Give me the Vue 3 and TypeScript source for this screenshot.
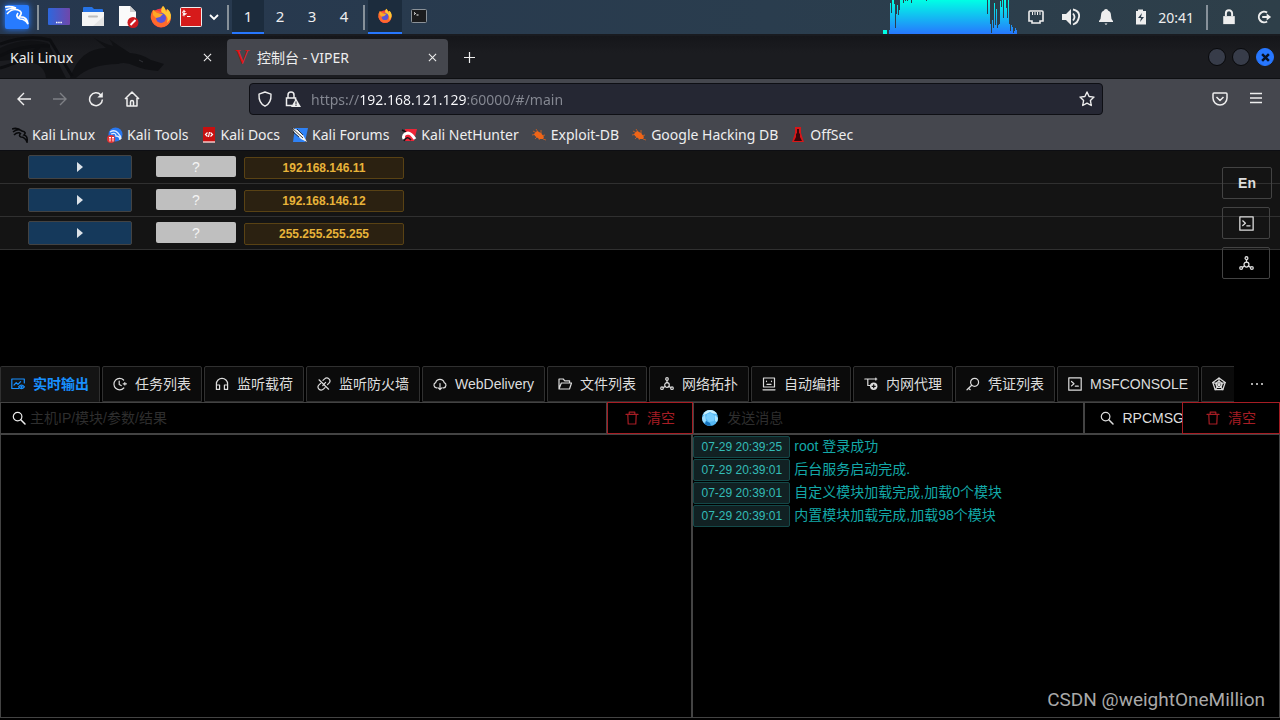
<script setup lang="ts">
import { ref } from 'vue'

interface Host { ip: string }
interface LogLine { time: string; text: string }
interface ConsoleTab { icon: string; label: string }
interface Bookmark { icon: string; label: string }

const stroke = 'fill="none" stroke="currentColor" stroke-width="1.2" stroke-linejoin="round" stroke-linecap="round"'

const lineIcons: Record<string, string> = {
  output: `<g ${stroke}><path d="M13.3 6V2H.8v9.5h7"/><path d="M3 8l2.2-2.3L7 7.4 9.6 4.6"/><path d="M7.6 9.8q2.8-3.6 5.8 0q-3 3.6-5.8 0z"/><circle cx="10.5" cy="9.8" r=".6"/></g>`,
  task: `<g ${stroke}><path d="M10.6 3A5.7 5.7 0 1 0 10.8 11"/><path d="M6.2 4v3.4l2 1.2M10.2 6.8h3.2M11.8 5.6v2.4"/></g>`,
  headset: `<g ${stroke}><path d="M1.4 12.4V7a5.6 5.6 0 0 1 11.2 0v5.4H9.4V8h3M1.6 8h3v4.4H1.4"/></g>`,
  unlink: `<g ${stroke}><path d="M6 3.400L7.600 1.900a3 3 0 0 1 4.400 4.300L10.500 7.700M8 10.600l-1.600 1.600A3 3 0 0 1 2 7.900l1.600-1.600M2 2.800l9.600 9.400M8.600 5.400L5.800 8.600"/></g>`,
  cloud: `<g ${stroke}><path d="M4 10.8H3.3A2.7 2.7 0 0 1 2.7 5.6A4.4 4.4 0 0 1 11.2 5.6A2.7 2.7 0 0 1 10.7 10.8H10M7 6.6v6M5.2 10.9L7 12.7l1.8-1.8"/></g>`,
  folder: `<g ${stroke}><path d="M1 12V2h4.2l1.6 1.8h4.8V6M1 12h10.5L13.500 6H3.300z"/></g>`,
  topology: `<g ${stroke}><circle cx="7" cy="2" r="1.3"/><circle cx="2" cy="11.2" r="1.3"/><circle cx="12" cy="11.2" r="1.3"/><circle cx="7" cy="8" r="2.3"/><path d="M7 3.3v2.4M5.2 9.4L3.2 10.6M8.8 9.4l2 1.2"/></g>`,
  robot: `<g ${stroke}><path d="M1.500 1h11v9h-11zM1 12.800h12M5 7.400h4"/><path d="M4.500 4v.6M9.500 4v.6"/></g>`,
  proxy: `<g ${stroke}><path d="M.8 2h12M3.800 2v6.500h3M11.800 1v2"/></g><circle cx="9.700" cy="9.300" r="3.700" fill="currentColor"/><path d="M9.700 7.300v4M7.700 9.300h4" stroke="#0c0c0c" stroke-width="1.2"/>`,
  key: `<g ${stroke}><circle cx="8.600" cy="5.300" r="4"/><path d="M5.700 8.200L1 12.800M2.600 11.300l1.600 1.400"/></g>`,
  terminal: `<g ${stroke}><path d="M.8.8h12.400v12.400H.8z"/><path d="M3.500 4.500L6 6.700 3.500 8.900M7.300 9.200h3"/></g>`,
  radar: `<g ${stroke}><path d="M7 1l6.200 4.500-2.400 7.200H3.200L.8 5.500z"/><path d="M7 4l3.300 2.500L9 10.300H5L3.700 6.500zM7 1v6.300M.8 5.500L7 7.300l6.200-1.800M3.200 12.700L7 7.300l3.800 5.400"/></g>`,
  search: `<g ${stroke}><circle cx="5.600" cy="5.600" r="4.300"/><path d="M8.800 8.800L13 13" stroke-width="1.500"/></g>`,
  trash: `<g ${stroke}><path d="M1 3.400h12M4.200 3.200V1.200h5.600v2M2.800 3.600l.4 9.400h7.600l.4-9.400"/></g>`,
}

const kaliMark = `<path d="M1 3Q7 2 12 4M2 6Q8 3 14 6M3 10Q8 4 14 6Q20 8 15 13Q23 12 24 20Q21 15 16 15Q11 13 14 9"/>`
const bookmarkIcons: Record<string, string> = {
  kali: `<g fill="none" stroke="#08090b" stroke-width="1.6"><path d="M0 2Q5 0 10 4M1 5Q6 1 10 4Q15 5 12 8Q16 9 15 15Q13 10 9 10Q6 9 9 6M2 8q3-3 6-2"/></g>`,
  tools: `<circle cx="8.500" cy="7.500" r="7" fill="#2877ef"/><path d="M3 5Q8 2 11 6Q14 9 14 12M4 7Q9 5 9 9q4 0 4 4" fill="none" stroke="#dcecff" stroke-width="1.3"/><circle cx="4" cy="12" r="4" fill="#e23131"/><path d="M2 10.500h2M3 10.500v4M5 10.500h2M6 10.500v4" stroke="#fff"/>`,
  docs: `<path d="M2 0h12v15H2z" fill="#c81010"/><path d="M2 15h12" stroke="#f4c7c7" stroke-width="1.5"/><path d="M6.500 5.500l-2 2 2 2M9.500 5.500l2 2-2 2M8.500 5l-1 5" fill="none" stroke="#fff" stroke-width="1.2"/>`,
  forums: `<path d="M3 1h13l-3 14H1z" fill="#2f82f5"/><path d="M0 1l6 2 5 5 4 7-6-3-6-6z" fill="#f6f6f6"/><path d="M0 1l11 10M1 5l6 5M5 2l6 6" stroke="#111" stroke-width=".8"/>`,
  hunter: `<path d="M4 2h12l-3 12H3z" fill="#ec2537"/><path d="M1 3l4 2" stroke="#111" stroke-width="1.5"/><path d="M3 12Q1 7 7 6Q10 6 14 12" fill="none" stroke="#fff" stroke-width="3"/><path d="M3 14q3-6 7-1" fill="none" stroke="#16171a" stroke-width="1.6"/>`,
  bug: `<path d="M3 7l3-3 4 2 3 4-1 2-4 0-4-3z" fill="#ef6518"/><path d="M1 8l5-1M4 12l3-3M5 2l2 3M10 3l0 4M14 8l-4 1M2 4l4 2M8 13l1-2M12 12l3 1" stroke="#ef6518" stroke-width=".7"/>`,
  offsec: `<path d="M5 0h6v6l3 9H2l3-9z" fill="#d71618"/><path d="M7 2h2v4l1 1v3l2 4H4l2-4V7l1-1z" fill="#3b0509"/>`,
}

const firefox = `<circle cx="12" cy="13" r="9.500" fill="#f73b4b"/><path d="M4 5Q1 9 2 14Q4 20 10 22Q18 23 21 17Q24 10 18 4Q17 7 14 1Q11 4 12 7Q7 5 4 5z" fill="#ff6a2c"/><path d="M14 1q-4 5 1 8t3 9q6-5 3-11-1-2-3-3 0 2-1 3-1-5-3-6z" fill="#ffc833"/><circle cx="12" cy="13" r="5" fill="#5a55d8"/><path d="M4 5l4 3 6 1-3 3-4 1-3-3z" fill="#ffa725"/>`

const workspaces: string[] = ['1', '2', '3', '4']
const bookmarks: Bookmark[] = [
  { icon: 'kali', label: 'Kali Linux' },
  { icon: 'tools', label: 'Kali Tools' },
  { icon: 'docs', label: 'Kali Docs' },
  { icon: 'forums', label: 'Kali Forums' },
  { icon: 'hunter', label: 'Kali NetHunter' },
  { icon: 'bug', label: 'Exploit-DB' },
  { icon: 'bug', label: 'Google Hacking DB' },
  { icon: 'offsec', label: 'OffSec' },
]
const hosts: Host[] = [{ ip: '192.168.146.11' }, { ip: '192.168.146.12' }, { ip: '255.255.255.255' }]
const tabs: ConsoleTab[] = [
  { icon: 'output', label: '实时输出' },
  { icon: 'task', label: '任务列表' },
  { icon: 'headset', label: '监听载荷' },
  { icon: 'unlink', label: '监听防火墙' },
  { icon: 'cloud', label: 'WebDelivery' },
  { icon: 'folder', label: '文件列表' },
  { icon: 'topology', label: '网络拓扑' },
  { icon: 'robot', label: '自动编排' },
  { icon: 'proxy', label: '内网代理' },
  { icon: 'key', label: '凭证列表' },
  { icon: 'terminal', label: 'MSFCONSOLE' },
  { icon: 'radar', label: '' },
]
const logs: LogLine[] = [
  { time: '07-29 20:39:25', text: 'root 登录成功' },
  { time: '07-29 20:39:01', text: '后台服务启动完成.' },
  { time: '07-29 20:39:01', text: '自定义模块加载完成,加载0个模块' },
  { time: '07-29 20:39:01', text: '内置模块加载完成,加载98个模块' },
]

const activeTab = ref(0)
const workspace = ref('1')
const address = ref('https://192.168.121.129:60000/#/main')
const filterText = ref('')
const message = ref('')

// CPU load samples: distance of each bar's top from the panel's top edge
const rise = [30, 3, 13, 0, 0, 4, 28, 14, 5, 15, 10]
const plateau = Array.from({ length: 87 }, (_, i) => ({ 3: 3, 5: 1, 7: 1, 11: 3, 26: 1 } as Record<number, number>)[i] ?? 0)
const fall = [14, 0, 0, 24, 33, 20, 28, 3, 25, 9, 28, 25, 24, 1, 7, 0, 18, 0, 0, 8, 18, 0, 24, 31, 25, 27, 33, 31, 28, 30]
const graphPath = [...rise, ...plateau, ...fall].map((top, i) => `M${i + 6} ${top}h1V34h-1z`).join('')
</script>

<template>
  <div class="desktop">
    <header class="panel">
      <button class="launcher" aria-label="Applications">
        <svg viewBox="0 0 26 26"><rect x="1" y="1" width="24" height="24" rx="2" fill="#277bff" /><g fill="none" stroke="#fff" stroke-width="1.7" v-html="kaliMark" /></svg>
      </button>
      <i class="rule"></i>
      <button class="launch" aria-label="Show desktop">
        <svg viewBox="0 0 24 24"><defs><linearGradient id="desk" x2="1" y2="0"><stop stop-color="#2d67dd" /><stop offset="1" stop-color="#7047aa" /></linearGradient></defs><rect x="1" y="3" width="22" height="17" rx="1" fill="url(#desk)" /><path d="M9 17.500h6" stroke="#fff" stroke-width="1.5" stroke-dasharray="1.5 .7" /></svg>
      </button>
      <button class="launch" aria-label="Files">
        <svg viewBox="0 0 24 24"><path d="M2 10V3q0-1 1-1h8l2 2h8q1 0 1 1v4z" fill="#2673e6" /><path d="M1 7h22v14H1z" fill="#f5f5f5" /><path d="M12 21L23 11v10z" fill="#e4e4e4" /><path d="M8 11.500h8" stroke="#bdbdbd" stroke-width="2" stroke-linecap="round" /></svg>
      </button>
      <button class="launch" aria-label="Editor">
        <svg viewBox="0 0 24 24"><path d="M4 1h11l6 6v14H4z" fill="#fafafa" /><path d="M15 1v6h6z" fill="#cfcfcf" /><circle cx="18" cy="17.500" r="5.500" fill="#cf1b20" /><path d="M15.500 20l5-5" stroke="#fff" stroke-width="2" /></svg>
      </button>
      <button class="launch" aria-label="Firefox"><svg viewBox="0 0 24 24" v-html="firefox" /></button>
      <button class="launch term" aria-label="Root terminal">
        <svg viewBox="0 0 24 24"><rect x="1.500" y="2.500" width="21" height="19" rx="1" fill="#d61a1a" stroke="#eee" /><g fill="none" stroke="#fff"><path d="M6.500 6.500q-3-1-3 .8t3 1.400-3 1.400M5 4.800v6.500M8 11.500h3.500" /></g></svg>
      </button>
      <svg class="chev" viewBox="0 0 10 10"><path d="M1 3l4 4 4-4" fill="none" stroke="#fff" stroke-width="1.8" /></svg>
      <i class="rule tight"></i>
      <nav class="spaces">
        <button v-for="n in workspaces" :key="n" :class="{ on: workspace === n }" @click="workspace = n">{{ n }}</button>
      </nav>
      <i class="rule tight"></i>
      <button class="window on" aria-label="Firefox window"><svg viewBox="0 0 24 24" v-html="firefox" /></button>
      <button class="window" aria-label="Terminal window">
        <svg viewBox="0 0 16 16"><rect x=".5" y="1.500" width="15" height="13" rx="1" fill="#1b1c1e" stroke="#8b9299" /><path d="M3 4.500l1.500 1L3 6.500M5.500 7h2" fill="none" stroke="#fff" /></svg>
      </button>
      <svg class="graph" viewBox="0 0 134 34">
        <defs><linearGradient id="load" gradientUnits="userSpaceOnUse" x1="0" y1="0" x2="0" y2="34"><stop stop-color="#00ffe5" /><stop offset="1" stop-color="#2777ff" /></linearGradient></defs>
        <path d="M0 30h4v4H0z" fill="#00ffe5" /><path :d="graphPath" fill="url(#load)" shape-rendering="crispEdges" />
      </svg>
      <div class="tray">
        <button aria-label="Network"><svg viewBox="0 0 18 18"><path d="M3 3h12q1 0 1 1v9h-3v2H5v-2H2V4q0-1 1-1z" fill="none" stroke="currentColor" stroke-width="1.6" /><path d="M5.500 4v3M8 4v3M10.500 4v3M13 4v3" stroke="currentColor" /></svg></button>
        <button aria-label="Volume"><svg viewBox="0 0 18 18"><path d="M0 6h4l5-5v16l-5-5H0z" fill="currentColor" /><path d="M11 5.500q3 3.500 0 7M11 1.500q7 1.500 6 7.500t-6 7.500" fill="none" stroke="currentColor" stroke-width="1.8" /></svg></button>
        <button aria-label="Notifications"><svg viewBox="0 0 18 18"><path d="M9 1q2 0 2 1.500 3 1 3 5 0 4 2 5.500v1H2v-1q2-1.500 2-5.500 0-4 3-5Q7 1 9 1zM7.500 15.500h3l-1.500 1.500z" fill="currentColor" /></svg></button>
        <button aria-label="Battery"><svg viewBox="0 0 18 18"><path d="M6 3V1.500h5V3h3v13.500H4V3z" fill="currentColor" /><path d="M10 5l-4 5h3l-1 4 4-5H9z" fill="#2d3e4c" /></svg></button>
      </div>
      <time class="clock">20:41</time>
      <i class="rule"></i>
      <button class="sys" aria-label="Lock"><svg viewBox="0 0 18 18"><path d="M2.500 8h13v9h-13z" fill="currentColor" /><path d="M5.500 8V5a3.500 3.500 0 0 1 7 0v3" fill="none" stroke="currentColor" stroke-width="2.2" /></svg></button>
      <button class="sys" aria-label="Log out"><svg viewBox="0 0 18 18"><path d="M12.500 4A6 6 0 1 0 12.500 14" fill="none" stroke="currentColor" stroke-width="2.2" /><path d="M7 8h5V5l5 4-5 4v-3H7z" fill="currentColor" /></svg></button>
    </header>

    <div class="titlebar">
      <svg class="dragon" viewBox="0 0 180 42"><path d="M0 12Q25 0 48 7L66 42H46Q44 20 0 25zM70 42Q80 12 106 12L94 2Q105 8 113 10Q112 6 109 3Q119 10 130 17Q142 18 151 24L164 28 158 35Q144 34 135 30Q125 25 118 28Q91 28 76 42z" fill="#101114" /><path d="M0 8Q28-2 50 4L72 40M0 32Q26 25 39 11M0 20Q22 8 50 10" fill="none" stroke="#0d0e11" stroke-width="3" /><path d="M139 24l4 2" stroke="#303137" /></svg>
      <div class="btab"><span>Kali Linux</span><button class="x" aria-label="Close tab"><svg viewBox="0 0 10 10"><path d="M1 1l8 8M9 1L1 9" stroke="currentColor" stroke-width="1.2" /></svg></button></div>
      <div class="btab current"><b class="v">V</b><span>控制台 - VIPER</span><button class="x" aria-label="Close tab"><svg viewBox="0 0 10 10"><path d="M1 1l8 8M9 1L1 9" stroke="currentColor" stroke-width="1.2" /></svg></button></div>
      <button class="plus" aria-label="New tab"><svg viewBox="0 0 12 12"><path d="M6 0v12M0 6h12" stroke="currentColor" stroke-width="1.3" /></svg></button>
      <div class="wins">
        <button aria-label="Minimise"></button><button aria-label="Maximise"></button>
        <button class="close" aria-label="Close"><svg viewBox="0 0 8 8"><path d="M1 1l6 6M7 1L1 7" stroke="#071123" stroke-width="2.2" /></svg></button>
      </div>
    </div>

    <div class="toolbar">
      <div class="nav">
        <button aria-label="Back"><svg viewBox="0 0 16 16"><path d="M15 8H2M8 2L2 8l6 6" fill="none" stroke="currentColor" stroke-width="1.4" /></svg></button>
        <button aria-label="Forward" disabled><svg viewBox="0 0 16 16"><path d="M1 8h13M8 2l6 6-6 6" fill="none" stroke="currentColor" stroke-width="1.4" /></svg></button>
        <button aria-label="Reload"><svg viewBox="0 0 16 16"><path d="M12.800 4A6.400 6.400 0 1 0 14.400 8.500" fill="none" stroke="currentColor" stroke-width="1.5" /><path d="M14.800 1v5.500H9.300z" fill="currentColor" /></svg></button>
        <button aria-label="Home"><svg viewBox="0 0 16 16"><path d="M1 8l7-7 7 7M3 7v8h10V7M6.500 15v-4q0-1.500 1.500-1.500T9.500 11v4" fill="none" stroke="currentColor" stroke-width="1.5" stroke-linejoin="round" /></svg></button>
      </div>
      <div class="url">
        <svg viewBox="0 0 16 16"><path d="M8 1l6 2.200Q14.500 12 8 15.200 1.500 12 2 3.200z" fill="none" stroke="currentColor" stroke-width="1.4" stroke-linejoin="round" /></svg>
        <svg class="lock" viewBox="0 0 18 16"><path d="M8 14.500H2.500V7h9v2M4 7V4a3 3 0 0 1 6 0v3" fill="none" stroke="currentColor" stroke-width="1.5" /><path d="M12 7.500l5 8.500H7z" fill="currentColor" /><path d="M12 10.500v3M12 14v1" stroke="#252733" /></svg>
        <input v-model="address" type="text" aria-label="Address" spellcheck="false" />
        <button aria-label="Bookmark"><svg viewBox="0 0 16 16"><path d="M8 1l2.100 4.500 4.900.6-3.600 3.400.9 5L8 12.100l-4.300 2.400.9-5L1 6.100l4.900-.6z" fill="none" stroke="currentColor" stroke-width="1.4" stroke-linejoin="round" /></svg></button>
      </div>
      <div class="menu">
        <button aria-label="Pocket"><svg viewBox="0 0 16 16"><path d="M2 2h12q1 0 1 1v4A7 7 0 0 1 1 7V3q0-1 1-1zM4.500 6L8 9.500 11.500 6" fill="none" stroke="currentColor" stroke-width="1.5" stroke-linejoin="round" /></svg></button>
        <button aria-label="Menu"><svg viewBox="0 0 16 16"><path d="M2 2.500h12M2 7h12M2 11.500h12" stroke="currentColor" stroke-width="1.3" /></svg></button>
      </div>
    </div>

    <nav class="bookmarks">
      <a v-for="b in bookmarks" :key="b.label" href="#"><svg viewBox="0 0 16 16" v-html="bookmarkIcons[b.icon]" />{{ b.label }}</a>
    </nav>

    <main class="viper">
      <section class="hosts">
        <div v-for="h in hosts" :key="h.ip" class="host">
          <button class="expand" aria-label="Expand"><svg viewBox="0 0 6 10"><path d="M0 0l6 5-6 5z" fill="currentColor" /></svg></button>
          <button class="os">?</button>
          <span class="ip">{{ h.ip }}</span>
        </div>
        <div class="float">
          <button class="lang">En</button>
          <button aria-label="Console"><svg viewBox="0 0 14 14" v-html="lineIcons.terminal" /></button>
          <button aria-label="Topology"><svg viewBox="0 0 14 14" v-html="lineIcons.topology" /></button>
        </div>
      </section>

      <div class="tabbar">
        <div class="tabs" role="tablist">
          <button v-for="(t, i) in tabs" :key="t.icon" role="tab" :aria-label="t.label || 'Radar'" :aria-selected="activeTab === i" :class="{ on: activeTab === i }" @click="activeTab = i">
            <svg viewBox="0 0 14 14" v-html="lineIcons[t.icon]" /><span>{{ t.label }}</span>
          </button>
        </div>
        <button class="more" aria-label="More tabs"><svg viewBox="0 0 12 4"><path d="M0 1h2v2H0zM5 1h2v2H5zM10 1h2v2h-2z" fill="currentColor" /></svg></button>
      </div>

      <div class="panes">
        <section class="pane left">
          <div class="bar">
            <label class="field"><svg viewBox="0 0 14 14" v-html="lineIcons.search" /><input v-model="filterText" type="text" placeholder="主机IP/模块/参数/结果" /></label>
            <button class="clear"><svg viewBox="0 0 14 14" v-html="lineIcons.trash" />清空</button>
          </div>
          <div class="list"></div>
        </section>
        <section class="pane right">
          <div class="bar">
            <label class="field chat">
              <svg viewBox="0 0 16 16"><circle cx="8" cy="8" r="8" fill="#55b8f4" /><path d="M8 0a8 8 0 0 1 7 4l-4-.5L8 2 3 4.500 1 5Q3 0 8 0z" fill="#c8efff" /><path d="M0 8l3-4 1 7-2 2Q0 11 0 8z" fill="#9bdcff" /><path d="M3 14l1-3 4 2 1 3Q5 16 3 14z" fill="#1572be" /><path d="M16 8l-3-3v6l2 1q1-2 1-4z" fill="#a9e5ff" /><path d="M5 4l4-1 4 3-1 5-5 1-3-4z" fill="#76cdff" /></svg>
              <input v-model="message" type="text" placeholder="发送消息" />
            </label>
            <button class="rpc"><svg viewBox="0 0 14 14" v-html="lineIcons.search" />RPCMSG</button>
            <button class="clear"><svg viewBox="0 0 14 14" v-html="lineIcons.trash" />清空</button>
          </div>
          <div class="list">
            <div v-for="(l, i) in logs" :key="i" class="log"><time>{{ l.time }}</time><span>{{ l.text }}</span></div>
          </div>
        </section>
      </div>
      <div class="credit">CSDN @weightOneMillion</div>
    </main>
  </div>
</template>

<style>
body { margin: 0; background: #000; }
</style>

<style scoped>
* { box-sizing: border-box; }
svg { display: block; flex: none; }
button { appearance: none; margin: 0; padding: 0; border: 0; background: none; color: inherit; font: inherit; display: flex; align-items: center; justify-content: center; flex: none; }
input { appearance: none; border: 0; outline: 0; background: none; padding: 0; margin: 0; font: inherit; min-width: 0; flex: 1; }
.desktop { min-height: 100vh; display: flex; flex-direction: column; color: #eee; font: 14px "Noto Sans", "Noto Sans CJK SC", sans-serif; }

.panel { height: 36px; flex: none; display: flex; align-items: center; padding: 0 8px 0 4px; background: linear-gradient(90deg, #26374e, #2a3d4e 60%, #2e3f49); border-bottom: 2px solid #191b20; }
.launcher svg { width: 26px; height: 26px; filter: drop-shadow(0 0 3px #277bff); }
.rule { width: 2px; height: 25px; background: #87919a; flex: none; margin: 0 8px 0 7px; }
.rule.tight { margin: 0 3px; }
.launch { width: 24px; margin-right: 10px; }
.launch svg { width: 24px; height: 24px; }
.launch.term { margin-right: 6px; margin-left: -4px; }
.chev { width: 10px; height: 10px; margin-right: 5px; }
.spaces { display: flex; height: 100%; }
.spaces button { width: 32px; height: 100%; font-size: 15px; border-bottom: 2px solid transparent; }
.window { width: 34px; height: 100%; border-bottom: 2px solid transparent; }
.spaces .on, .window.on { background: #1c2c3d; border-bottom: 2px solid #2777ff; }
.window svg { width: 16px; height: 16px; }
.graph { width: 134px; height: 34px; margin-left: auto; }
.tray { display: flex; gap: 17px; margin-left: 10px; }
.tray svg { width: 18px; height: 18px; }
.sys svg { width: 16px; height: 16px; }
.clock { margin: 0 5px 0 8px; }
.sys { margin-left: 5px; }
.sys + .sys { margin-left: 19px; }

.titlebar { position: relative; height: 43px; flex: none; display: flex; align-items: center; padding-right: 6px; background: linear-gradient(#15161a, #1b1c20 40%, #1b1c20); border-bottom: 1px solid #0e0f12; }
.dragon { position: absolute; left: 0; top: 0; width: 180px; height: 42px; }
.btab { position: relative; width: 221px; height: 36px; margin-right: 4px; padding: 0 10px; display: flex; align-items: center; border-radius: 4px; }
.btab:first-of-type { width: 223px; }
.btab.current { background: #45474e; padding-left: 8px; }
.btab span { flex: 1; }
.v { width: 15px; margin-right: 7px; color: #e51214; font: 20px/20px "Liberation Serif", serif; }
.x { width: 12px; height: 12px; }
.x svg { width: 9px; height: 9px; }
.plus { margin-left: 12px; }
.plus svg { width: 11px; height: 11px; }
.wins { display: flex; gap: 6px; margin-left: auto; }
.wins button { width: 18px; height: 18px; border-radius: 50%; background: #373c49; border: 1px solid #08090b; }
.wins .close { background: #2777ff; border-color: #2777ff; }
.wins svg { width: 9px; height: 9px; }

.toolbar { height: 41px; flex: none; display: flex; align-items: center; background: #45474e; padding: 0 16px 1px; }
.nav { display: flex; gap: 20px; width: 233px; }
.nav svg, .url svg, .menu svg { width: 16px; height: 16px; }
.nav button:disabled { color: #7e8085; }
.url { flex: 1; height: 32px; display: flex; align-items: center; padding: 0 7px; background: #252733; border: 1px solid #0e0f14; border-radius: 4px; }
.url .lock { width: 18px; margin: 0 9px 0 11px; }
/* the host part of the address is brighter than its scheme, port and path */
.url input { height: 24px; color: transparent; caret-color: #fff; background: linear-gradient(90deg, #868993 49px, #fbfbfe 49px 156px, #868993 156px); background-clip: text; -webkit-background-clip: text; }
.menu { display: flex; gap: 20px; width: 161px; justify-content: flex-end; }

.bookmarks { height: 31px; flex: none; display: flex; align-items: center; gap: 12px; padding: 0 12px 1px; background: #45474e; border-bottom: 1px solid #0d0e13; }
.bookmarks a { display: flex; align-items: center; gap: 4px; color: #eee; text-decoration: none; white-space: nowrap; }
.bookmarks svg { width: 16px; height: 16px; }

.viper { position: relative; flex: 1; display: flex; flex-direction: column; background: #000; font: 14px/20px "Liberation Sans", "Noto Sans CJK SC", sans-serif; padding-bottom: 2px; }
.hosts { position: relative; min-height: 215px; flex: none; }
.host { height: 33px; display: flex; align-items: flex-end; padding: 0 28px 4px; background: #141414; border-bottom: 1px solid #303030; }
.expand { width: 104px; height: 24px; background: #15395b; border: 1px solid #434343; border-radius: 2px; color: #dce2e8; }
.expand svg { width: 6px; height: 10px; }
.os { width: 80px; height: 21px; margin: 0 8px 2px 24px; background: #bfbfbf; border-radius: 2px; color: #f4f4f4; }
.ip { width: 160px; height: 22px; border: 1px solid #594214; border-radius: 2px; background: #2b2111; color: #e8b339; font-size: 12px; line-height: 20px; font-weight: 700; text-align: center; }
.float { position: absolute; right: 8px; top: 16px; width: 50px; display: flex; flex-direction: column; gap: 8px; }
.float button { width: 48px; height: 32px; border: 1px solid #434343; border-radius: 2px; color: #ddd; }
.float .lang { width: 50px; font-weight: 700; }
.float svg { width: 15px; height: 15px; }

.tabbar { display: flex; height: 36px; flex: none; }
.tabs { flex: 1; min-width: 0; display: flex; gap: 2px; overflow: hidden; }
.tabs button { height: 36px; padding: 0 10px; gap: 8px; white-space: nowrap; background: #0b0b0b; border: 1px solid #303030; border-radius: 2px 2px 0 0; color: #ddd; }
.tabs .on { background: #141414; color: #1890ff; border-bottom-color: #141414; font-weight: 700; }
.tabs svg { width: 14px; height: 14px; }
.more { width: 46px; }
.more svg { width: 12px; height: 4px; color: #aaa; }

.panes { flex: 1; display: flex; }
.pane { flex: 13 1 0; min-width: 0; display: flex; flex-direction: column; }
.pane.right { flex-grow: 11; }
.bar { display: grid; grid-template-columns: minmax(0, 21fr) minmax(0, 3fr); height: 32px; flex: none; }
.right .bar { grid-template-columns: minmax(0, 16fr) minmax(0, 4fr) minmax(0, 4fr); }
.field { display: flex; align-items: center; padding: 0 11px; gap: 4px; border: 1px solid #434343; }
.field svg, .rpc svg, .clear svg { width: 14px; height: 14px; }
.field input { color: #ddd; }
.field input::placeholder { color: #2e2e2e; opacity: 1; }
.field.chat { padding-left: 8px; gap: 9px; }
.field.chat svg { width: 16px; height: 16px; }
.clear { gap: 8px; border: 1px solid #a61d24; color: #a61d24; background: #000; }
.rpc { gap: 8px; justify-content: flex-start; padding-left: 15px; overflow: hidden; border: 1px solid #434343; border-right: 0; color: #ddd; }
.list { flex: 1; border: 1px solid #434343; padding-top: 1px; }
.right .list { border-left-width: 0; }
.left .list { border-right-width: 2px; }
.log { display: flex; align-items: flex-start; height: 23px; gap: 4px; color: #13a8a8; white-space: nowrap; }
.log time { width: 97px; height: 22px; border: 1px solid #144848; border-radius: 2px; background: #112123; color: #33bcb7; font-size: 12px; line-height: 20px; text-align: center; }
.credit { position: absolute; right: 15px; bottom: 8px; color: #a9a9a9; font: 19px/24px Roboto, sans-serif; }
</style>
